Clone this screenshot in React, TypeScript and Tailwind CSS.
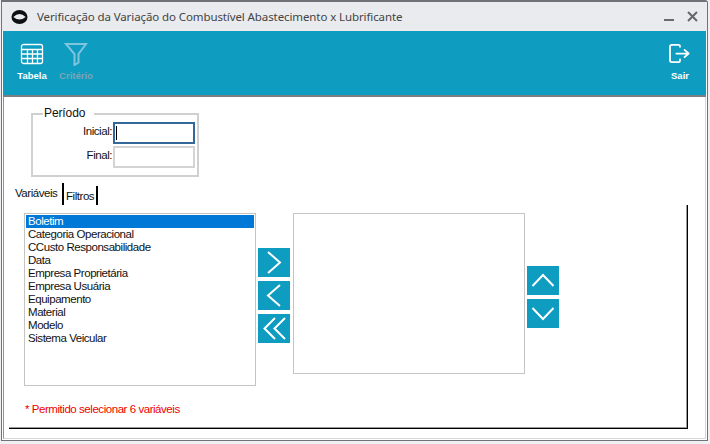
const items = [
  "Boletim",
  "Categoria Operacional",
  "CCusto Responsabilidade",
  "Data",
  "Empresa Proprietária",
  "Empresa Usuária",
  "Equipamento",
  "Material",
  "Modelo",
  "Sistema Veicular",
];

function Chevron({ d }: { d: string }) {
  return (
    <button className="w-8 h-[29px] bg-[#0e9cc1] flex items-center justify-center">
      <svg width="32" height="29" viewBox="0 0 32 29" fill="none" stroke="white" strokeWidth="2">
        <path d={d} />
      </svg>
    </button>
  );
}

function ToolButton({ label, dim, wide, children }: { label: string; dim?: boolean; wide: string; children: React.ReactNode }) {
  return (
    <div className={`${wide} flex flex-col items-center`}>
      <div className="h-[28px] flex items-center justify-center">{children}</div>
      <span className={`mt-[2px] text-[9.5px] leading-[12px] font-bold ${dim ? "text-[#7fa5b3]" : "text-white"}`}>{label}</span>
    </div>
  );
}

export default function App() {
  return (
    <div className="w-[710px] h-[444px] bg-[#f0f0f4] overflow-hidden font-['Liberation_Sans',sans-serif] text-[#111]">
      <div className="w-[707px] h-[441px] ml-px bg-white border border-[#6f7278] border-t-2 rounded-tr-[3px] flex flex-col">
        <div className="h-[29px] bg-[#e9ebee] flex items-center shrink-0">
          <svg className="ml-[9px]" width="17" height="16" viewBox="0 0 18 16">
            <ellipse cx="9" cy="8" rx="8.500" ry="7.500" fill="#0d0f12" />
            <path d="M2.500 8 Q9 1.500 15.500 8 Q9 13.500 2.500 8Z" fill="#e9ebee" />
          </svg>
          <span className="ml-[9px] text-[11.5px] tracking-[-0.1px] text-[#444] font-['Noto_Sans',sans-serif]">
            Verificação da Variação do Combustível Abastecimento x Lubrificante
          </span>
          <div className="ml-auto mr-[9px] flex items-center gap-[13px]">
            <svg width="10" height="10" viewBox="0 0 10 10"><path d="M0 8h10" stroke="#6a6a6a" strokeWidth="2" /></svg>
            <svg className="mt-[-1px]" width="11" height="11" viewBox="0 0 11 11"><path d="M1 1l9 9M10 1l-9 9" stroke="#666" strokeWidth="2" /></svg>
          </div>
        </div>

        <div className="mx-px h-[66px] shrink-0 bg-[#0e9cc1] border-b-2 border-[#7b7f84] flex items-start pt-[9px] pr-[6px]">
          <ToolButton label="Tabela" wide="w-[46px] ml-[6px]">
            <svg width="24" height="22" viewBox="0 0 24 22" fill="none" stroke="white" strokeWidth="1.3">
              <rect x="1.500" y="1.500" width="21" height="19" rx="2" />
              <path d="M1.500 6.500h21M1.500 11h21M1.500 15.500h21M7.500 6.500v14M12.500 6.500v14M17.500 6.500v14" />
            </svg>
          </ToolButton>
          <ToolButton label="Critério" dim wide="w-[44px] ml-[-1px]">
            <svg width="24" height="24" viewBox="0 0 24 24" fill="none" stroke="#7fc6dc" strokeWidth="2">
              <path d="M2 2h20L14.500 12v8.500l-4 2.500V12Z" />
            </svg>
          </ToolButton>
          <div className="ml-auto">
            <ToolButton label="Sair" wide="w-[40px]">
              <svg width="22" height="20" viewBox="0 0 24 22" fill="none" stroke="white" strokeWidth="2" strokeLinecap="round" strokeLinejoin="round">
                <path d="M12 3V2.500a1.500 1.500 0 0 0-1.500-1.500H3a2 2 0 0 0-2 2v15a2 2 0 0 0 2 2h7.500a1.500 1.500 0 0 0 1.500-1.500V17" />
                <path d="M8 10.500h13M17 6.500l4.500 4-4.500 4" />
              </svg>
            </ToolButton>
          </div>
        </div>

        <div className="flex-1 mx-px mb-px border-l border-l-[#8f9296] border-r border-r-[#d8d8d8] border-b border-b-[#d8d8d8] text-[11.5px] leading-[13px] tracking-[-0.45px]">
          <fieldset className="ml-[27px] mt-[10px] w-[168px] h-[70px] border-2 border-[#d0d0d0] pl-[10px] pr-[2px]">
            <legend className="pl-[1px] pr-[9px] text-[12px] leading-[13px] tracking-[-0.1px]">Período</legend>
            <div className="mt-[2px] ml-[-1px] grid grid-cols-[1fr_82px] gap-y-[2px] items-center">
              <span className="text-right pr-px mt-[-3px]">Inicial:</span>
              <div className="h-[22px] border-2 border-[#34689b] flex items-center pl-[1px]">
                <div className="w-px h-[14px] bg-black" />
              </div>
              <span className="text-right pr-px mt-[-3px]">Final:</span>
              <div className="h-[22px] border-2 border-[#d4d4d4]" />
            </div>
          </fieldset>

          <div className="flex ml-[11px] mt-[9px] h-[19px] items-start">
            <span className="w-[47px] mt-[1px]">Variáveis</span>
            <span className="h-[22px] mt-[-3px] border-l-2 border-black" />
            <span className="h-[19px] border-r-2 border-black pl-[2px] pr-[2px] leading-[21px]">Filtros</span>
          </div>

          <div className="ml-[5px] mr-[17px] h-[224px] relative">
            <div className="h-full border-r border-b border-black shadow-[inset_-1px_-1px_0_#9a9a9a] flex items-start pl-[15px] pt-[8px]">
              <div className="w-[232px] h-[173px] border border-[#c4c4c4] p-[1px] shrink-0">
                {items.map((t, i) => (
                  <div key={t} className={`h-[13px] pl-[2px] ${i === 0 ? "bg-[#0078d7] text-white" : ""}`}>{t}</div>
                ))}
              </div>
              <div className="ml-[2px] mt-[35px] flex flex-col gap-[4px]">
                <Chevron d="M10 4 22 14.500 10 25" />
                <Chevron d="M22 4 10 14.500 22 25" />
                <Chevron d="M17 4 6.500 14.500 17 25M27 4 16.500 14.500 27 25" />
              </div>
              <div className="ml-[3px] w-[232px] h-[161px] border border-[#c4c4c4] shrink-0" />
              <div className="ml-[2px] mt-[53px] flex flex-col gap-[4px]">
                <Chevron d="M5.500 20 16 9 26.500 20" />
                <Chevron d="M5.500 9 16 20 26.500 9" />
              </div>
            </div>
            <span className="absolute left-[16px] top-[198px] text-[#f00000]">* Permitido selecionar 6 variáveis</span>
          </div>
        </div>
      </div>
    </div>
  );
}
